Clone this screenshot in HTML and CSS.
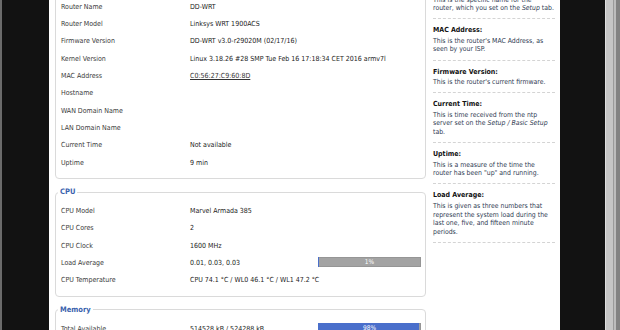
FILE: index.html
```html
<!DOCTYPE html>
<html>
<head>
    <title>DD-WRT Status</title>
    <meta name="viewport" content="width=device-width, initial-scale=1.0">
    <link rel="stylesheet" href="styles.css">
</head>
<body>
    <div class="frame">
        <div class="page">
            <div class="main">
                <fieldset>
                    <legend>Router</legend>
                    <div class="row"><span class="label">Router Name</span><span class="value">DD-WRT</span></div>
                    <div class="row"><span class="label">Router Model</span><span class="value">Linksys WRT 1900ACS</span></div>
                    <div class="row"><span class="label">Firmware Version</span><span class="value">DD-WRT v3.0-r29020M (02/17/16)</span></div>
                    <div class="row"><span class="label">Kernel Version</span><span class="value">Linux 3.18.26 #28 SMP Tue Feb 16 17:18:34 CET 2016 armv7l</span></div>
                    <div class="row"><span class="label">MAC Address</span><span class="value mac">C0:56:27:C9:60:8D</span></div>
                    <div class="row"><span class="label">Hostname</span><span class="value"></span></div>
                    <div class="row"><span class="label">WAN Domain Name</span><span class="value"></span></div>
                    <div class="row"><span class="label">LAN Domain Name</span><span class="value"></span></div>
                    <div class="row"><span class="label">Current Time</span><span class="value">Not available</span></div>
                    <div class="row"><span class="label">Uptime</span><span class="value">9 min</span></div>
                </fieldset>

                <fieldset>
                    <legend>CPU</legend>
                    <div class="row"><span class="label">CPU Model</span><span class="value">Marvel Armada 385</span></div>
                    <div class="row"><span class="label">CPU Cores</span><span class="value">2</span></div>
                    <div class="row"><span class="label">CPU Clock</span><span class="value">1600 MHz</span></div>
                    <div class="row">
                        <span class="label">Load Average</span><span class="value">0.01, 0.03, 0.03</span>
                        <div class="bar"><div class="bar-fill" style="width: 1%"></div><span class="bar-text">1%</span></div>
                    </div>
                    <div class="row"><span class="label">CPU Temperature</span><span class="value">CPU 74.1 &deg;C / WL0 46.1 &deg;C / WL1 47.2 &deg;C</span></div>
                </fieldset>

                <fieldset>
                    <legend>Memory</legend>
                    <div class="row">
                        <span class="label">Total Available</span><span class="value">514528 kB / 524288 kB</span>
                        <div class="bar"><div class="bar-fill" style="width: 98%"></div><span class="bar-text">98%</span></div>
                    </div>
                    <div class="row"><span class="label">Free</span><span class="value">6924 kB / 514528 kB</span></div>
                </fieldset>
            </div>

            <div class="help">
                <div class="help-item">
                    <h4>Router Name:</h4>
                    <p>This is the specific name for the<br>router, which you set on the <em>Setup</em> tab.</p>
                </div>
                <div class="help-item">
                    <h4>MAC Address:</h4>
                    <p>This is the router's MAC Address, as seen by your ISP.</p>
                </div>
                <div class="help-item">
                    <h4>Firmware Version:</h4>
                    <p>This is the router's current firmware.</p>
                </div>
                <div class="help-item">
                    <h4>Current Time:</h4>
                    <p>This is time received from the ntp server set on the <em>Setup / Basic Setup</em> tab.</p>
                </div>
                <div class="help-item">
                    <h4>Uptime:</h4>
                    <p>This is a measure of the time the router has been "up" and running.</p>
                </div>
                <div class="help-item">
                    <h4>Load Average:</h4>
                    <p>This is given as three numbers that represent the system load during the last one, five, and fifteen minute periods.</p>
                </div>
            </div>
        </div>
        <div class="gutter"></div>
        <div class="scrollbar"></div>
    </div>
</body>
</html>
```

FILE: styles.css
```css
html, body {
    margin: 0;
    padding: 0;
    background: #111;
}
body {
    font-family: 'DejaVu Sans Condensed', 'Liberation Sans', sans-serif;
    font-size: 7px;
    color: #333;
}
.frame {
    display: flex;
    height: 330px;
    overflow: hidden;
    background: #121212;
    border-left: 2px solid #6b6b6b;
    padding-left: 47px;
}
.page {
    width: 511px;
    flex-shrink: 0;
    background: #fff;
    display: flex;
    align-items: flex-start;
    overflow: hidden;
}
.main {
    width: 371px;
    margin-left: 6px;
    margin-top: -17px;
}
fieldset {
    margin: 0 0 8px 0;
    padding: 5px 4px 7px 5px;
    border: 1px solid #dadada;
    border-radius: 4px;
    min-width: 0;
}
legend {
    margin-left: -3px;
    padding: 0 2px;
    font-weight: bold;
    font-size: 7.5px;
    line-height: 10px;
    color: #3a62ad;
}
.row {
    display: flex;
    align-items: center;
    height: 17.33px;
}
.label {
    width: 129px;
    flex-shrink: 0;
    color: #3a3a3a;
}
.value {
    flex: 1;
    color: #222;
    white-space: nowrap;
}
.mac {
    text-decoration: underline;
    color: #333;
}
.bar {
    width: 103px;
    height: 10px;
    margin-top: -2px;
    flex-shrink: 0;
    display: grid;
    background: #a3a3a3;
    box-shadow: inset 0 0 0 1px #959595;
}
.bar-fill {
    grid-area: 1 / 1;
    height: 100%;
    background: #4a6fcb;
}
.bar-text {
    grid-area: 1 / 1;
    text-align: center;
    color: #fff;
    font-size: 6.5px;
    line-height: 10px;
}
.help {
    width: 122px;
    margin-left: 7px;
    margin-top: -22px;
}
.help-item {
    padding: 7px 0 5.5px;
    border-bottom: 1px dashed #d4d4d4;
}
.help h4 {
    margin: 0 0 2px;
    font-size: 7px;
    line-height: 8.6px;
    color: #111;
}
.help p {
    margin: 0;
    font-size: 6.85px;
    line-height: 8.6px;
    color: #2e3a52;
}
.gutter {
    width: 45px;
    flex-shrink: 0;
}
.scrollbar {
    width: 15px;
    flex-shrink: 0;
    background: linear-gradient(to right, #dedede 0, #dedede 1px, #c5c5c5 1px, #c5c5c5 8px, #9a9a9a 8px, #9a9a9a 9px, #bcbcbc 9px, #bcbcbc 11px, #828282 11px);
}
```
